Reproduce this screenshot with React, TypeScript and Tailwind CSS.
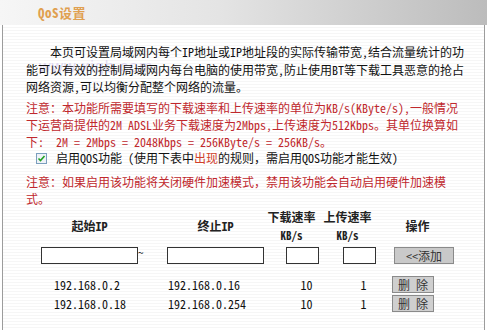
import React from 'react';

const font = { fontFamily: '"Noto Sans Mono CJK SC", "Noto Sans CJK SC", sans-serif' };

const rows = [
  { start: '192.168.0.2', end: '192.168.0.16', down: '10', up: '1' },
  { start: '192.168.0.18', end: '192.168.0.254', down: '10', up: '1' },
];

function Field({ w }: { w: string }) {
  return <div className={`h-[17px] border border-[#333] bg-white ${w}`} />;
}

export default function App() {
  return (
    <div className="w-[487px] h-[330px] overflow-hidden bg-white text-[12px] text-[#111]" style={font}>
      <div className="h-[25px] bg-[linear-gradient(to_right,#f6f6f6,#e4e4e4_45%,#bcbcbc)] pl-[38px] flex items-center">
        <span className="text-[13px] font-bold text-[#e0a050] tracking-[0.5px]">QoS设置</span>
      </div>
      <div className="relative mx-[2px] h-[305px] border-l border-r border-[#9c9c9c] bg-[repeating-linear-gradient(to_bottom,#ffffff_0px,#ffffff_2px,#f6f6f6_2px,#f6f6f6_3px)] pl-[23px] pr-[18px] pt-[18px]">
        <span className="absolute left-[36px] top-[30px] text-[16px] text-[#d4cbee]/70 tracking-[1px]" style={{ fontFamily: '"Liberation Sans", sans-serif' }}>
          www.xiqb.com
        </span>
        <p className="relative leading-[17.5px] indent-[24px]">
          本页可设置局域网内每个IP地址或IP地址段的实际传输带宽,结合流量统计的功能可以有效的控制局域网内每台电脑的使用带宽,防止使用BT等下载工具恶意的抢占网络资源,可以均衡分配整个网络的流量。
        </p>
        <p className="mt-[3px] leading-[17px] text-[#c0282d]">
          注意：本功能所需要填写的下载速率和上传速率的单位为KB/s(KByte/s),一般情况下运营商提供的2M ADSL业务下载速度为2Mbps,上传速度为512Kbps。其单位换算如下:
          <span className="whitespace-pre">  2M = 2Mbps = 2048Kbps = 256KByte/s = 256KB/s。</span>
        </p>
        <div className="flex items-center h-[17px]">
          <span className="ml-[10px] mr-[9px] flex h-[11px] w-[11px] items-center justify-center border border-[#7b9ebd] bg-[#eef2f8]">
            <svg width="9" height="9" viewBox="0 0 9 9">
              <path d="M1.5 4.5 L3.5 6.5 L7.5 2" fill="none" stroke="#21a121" strokeWidth="1.6" />
            </svg>
          </span>
          <span>
            启用QOS功能 (使用下表中<span className="text-[#d0402a]">出现</span>的规则，需启用QOS功能才能生效)
          </span>
        </div>
        <p className="mt-[6px] leading-[17px] text-[#c0282d]">
          注意：如果启用该功能将关闭硬件加速模式，禁用该功能会自动启用硬件加速模
          <br />
          式。
        </p>

        <div className="ml-[15px] mt-[1px] flex h-[36px] items-center font-bold text-[#222]">
          <div className="w-[97px] text-center">起始IP</div>
          <div className="w-[126px] pl-[29px]">
            <div className="w-[97px] text-center">终止IP</div>
          </div>
          <div className="w-[55px] text-center leading-[18px]">
            下载速率
            <br />
            <span className="text-[11px]">KB/s</span>
          </div>
          <div className="w-[57px] text-center leading-[18px]">
            上传速率
            <br />
            <span className="text-[11px]">KB/s</span>
          </div>
          <div className="w-[75px] pl-[8px] text-center">操作</div>
        </div>

        <div className="ml-[15px] mt-[3px] flex items-center">
          <Field w="w-[97px]" />
          <span className="w-[29px] self-start text-[11px] leading-[10px]">~</span>
          <Field w="w-[97px]" />
          <div className="w-[22px]" />
          <Field w="w-[33px]" />
          <div className="w-[24px]" />
          <Field w="w-[33px]" />
          <div className="w-[18px]" />
          <button className="h-[17px] w-[60px] border border-[#8a8a8a] bg-[#c9c9c9] text-[12px] leading-[15px] text-[#333]">
            &lt;&lt;添加
          </button>
        </div>

        <div className="mt-[12px] flex flex-col gap-[1px]">
          {rows.map((r) => (
            <div key={r.start} className="flex h-[18px] items-center">
              <div className="w-[28px]" />
              <div className="w-[114px]">{r.start}</div>
              <div className="w-[110px]">{r.end}</div>
              <div className="w-[57px] text-center">{r.down}</div>
              <div className="w-[57px] text-center">{r.up}</div>
              <button className="h-[17px] w-[42px] border border-[#8a8a8a] bg-[#cfcfcf] text-[12px] leading-[15px] text-[#333]">
                删 除
              </button>
            </div>
          ))}
        </div>
      </div>
    </div>
  );
}
